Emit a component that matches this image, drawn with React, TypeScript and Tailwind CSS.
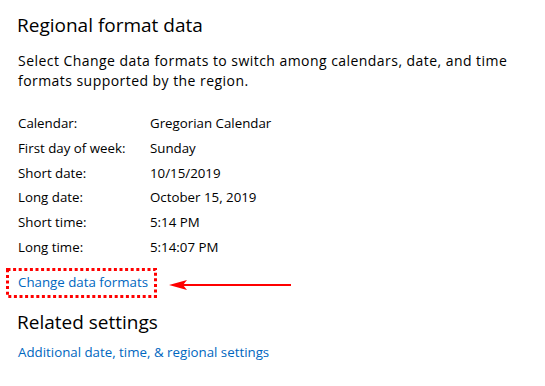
import React from "react";

const rows: [string, string][] = [
  ["Calendar:", "Gregorian Calendar"],
  ["First day of week:", "Sunday"],
  ["Short date:", "10/15/2019"],
  ["Long date:", "October 15, 2019"],
  ["Short time:", "5:14 PM"],
  ["Long time:", "5:14:07 PM"],
];

export default function App() {
  return (
    <div
      className="w-[545px] h-[386px] bg-white text-black overflow-hidden pl-[18px] pt-[11px]"
      style={{ fontFamily: '"Open Sans", "Noto Sans", sans-serif' }}
    >
      <h1 className="text-[19px] leading-[28px] -ml-[1px] text-black">Regional format data</h1>
      <p className="mt-[12px] text-[14px] leading-[19.5px] tracking-[0.45px] w-[520px]">
        Select Change data formats to switch among calendars, date, and time formats supported by the region.
      </p>
      <div className="mt-[22px] flex flex-col text-[13.3px]">
        {rows.map(([k, v]) => (
          <div key={k} className="flex items-center h-[24.7px]">
            <span className="w-[132px]">{k}</span>
            <span>{v}</span>
          </div>
        ))}
      </div>
      <div className="relative mt-[8px] h-[30px] flex items-center">
        <span className="text-[13.3px] text-[#0067c0]">Change data formats</span>
        <svg
          className="absolute left-[-18px] top-0"
          width="300"
          height="30"
          viewBox="0 0 300 30"
        >
          <rect
            x="7.5"
            y="1.5"
            width="148"
            height="27"
            fill="none"
            stroke="#ff0000"
            strokeWidth="3"
            strokeDasharray="3 2.6"
          />
          <line x1="180" y1="17" x2="291" y2="17" stroke="#ff0000" strokeWidth="2" />
          <path d="M169 17 L187 12 L183 17 L187 22 Z" fill="#ff0000" />
        </svg>
      </div>
      <h2 className="mt-[10px] text-[19px] leading-[28px] -ml-[1px]">Related settings</h2>
      <div className="mt-[6px] text-[13.3px] leading-[20px] text-[#0067c0]">
        Additional date, time, &amp; regional settings
      </div>
    </div>
  );
}
